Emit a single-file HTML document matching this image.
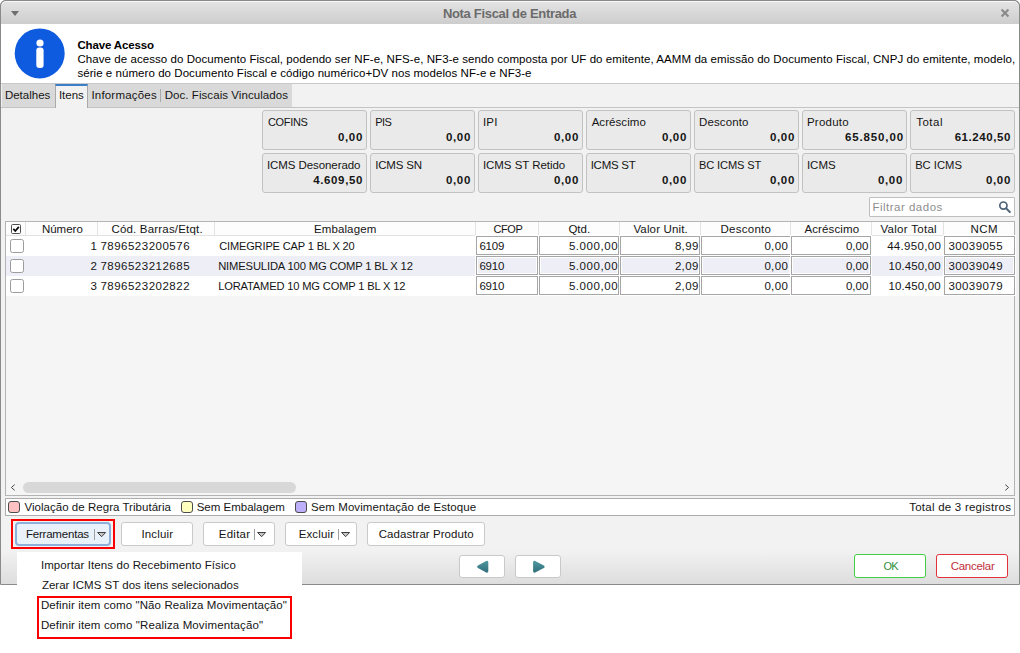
<!DOCTYPE html>
<html lang="pt-BR">
<head>
<meta charset="utf-8">
<title>Nota Fiscal de Entrada</title>
<style>
html,body{margin:0;padding:0;background:#fff;}
body{width:1020px;height:653px;position:relative;overflow:hidden;font-family:"Liberation Sans",sans-serif;font-size:11.5px;color:#151515;}
.a{position:absolute;box-sizing:border-box;}
.t{position:absolute;white-space:pre;line-height:14px;}
#win{left:0;top:0;width:1020px;height:585px;border:1px solid #8a8a8a;border-radius:6px 6px 0 0;background:#f2f2f2;overflow:hidden;}
#tbar{left:0;top:0;width:1020px;height:24px;background:linear-gradient(#e4e4e4,#cdcdcd);box-shadow:inset 0 1px 0 #f8f8f8;}
#head{left:1px;top:24px;width:1018px;height:59px;background:#fff;}
#tabs{left:1px;top:83px;width:1018px;height:25px;background:#f2f2f2;border-top:1px solid #c9c9c9;border-bottom:1px solid #c4c4c4;}
.tab{top:84px;height:23px;background:#d9d9d9;}
#tabact{left:55px;top:84px;width:33px;height:24px;background:#f2f2f2;border:1px solid #a9a9a9;border-bottom:none;border-top:2px solid #3b7fc9;}
.sb{width:105px;height:40px;background:#eaeaea;border:1px solid #c2c2c2;border-radius:3px;}
#filter{left:869px;top:197px;width:146px;height:20px;background:#fff;border:1px solid #bebebe;border-radius:1px;}
#tbl{left:5px;top:221px;width:1010px;height:275px;background:#f5f5f5;border:1px solid #b4b4b4;}
#thead{left:6px;top:222px;width:1008px;height:14px;background:#fdfdfd;border-bottom:1px solid #e2e2e2;}
.hs{top:222px;width:1px;height:14px;background:#e2e2e2;}
.row{left:6px;width:1008px;height:20px;background:#fff;}
.row.alt{background:#eeeff6;}
.cell{height:19px;border:1px solid #a6a6a6;box-shadow:inset 0 0 0 1px #fff,0 0 0 1px #fff;}
.cb{left:10px;width:14px;height:14px;background:#fff;border:1px solid #9c9c9c;border-radius:2.5px;}
#legend{left:5px;top:498px;width:1010px;height:18px;background:#fff;border:1px solid #adadad;}
.sw{top:501px;width:12px;height:12px;border:1px solid #4c4c4c;border-radius:3px;}
.btn{top:522px;height:24px;background:#fff;border:1px solid #c9c9c9;border-radius:3px;}
.sep{top:529px;width:1px;height:11px;background:#a0a0a0;}
.red{border:2px solid #fa0000;}
#foot{left:1px;top:550px;width:1018px;height:34px;background:linear-gradient(#f2f2f2,#dddddd);}
#menu{left:17px;top:552px;width:285px;height:101px;background:#fff;}
</style>
</head>
<body>
<div id="win" class="a"></div>
<div id="tbar" class="a" style="border:1px solid #8a8a8a;border-bottom:none;border-radius:6px 6px 0 0;"></div>
<svg class="a" style="left:10px;top:10px" width="10" height="7" viewBox="0 0 10 7"><path d="M1 1h8L5 6z" fill="#6f6f6f"/></svg>
<svg class="a" style="left:1000px;top:8px" width="10" height="10" viewBox="0 0 10 10"><path d="M1.6 1.6l6.8 6.8M8.4 1.6l-6.8 6.8" stroke="#8a8a8a" stroke-width="2.1" stroke-linecap="butt"/></svg>
<div id="head" class="a"></div>
<svg class="a" style="left:14px;top:28px" width="51" height="51" viewBox="0 0 51 51"><circle cx="25.7" cy="25.4" r="25" fill="#0f5be0"/><circle cx="26" cy="15" r="3.6" fill="#fff"/><rect x="22.3" y="19.6" width="7.3" height="20.4" rx="3" fill="#fff"/></svg>
<div id="tabs" class="a"></div>
<div class="a tab" style="left:2px;width:53px;"></div>
<div class="a tab" style="left:88px;width:204px;"></div>
<div class="a" style="left:160px;top:89px;width:1px;height:13px;background:#a9a9a9;"></div>
<div id="tabact" class="a"></div>
<div class="a sb" style="left:262px;top:110px;"></div>
<div class="a sb" style="left:370px;top:110px;"></div>
<div class="a sb" style="left:478px;top:110px;"></div>
<div class="a sb" style="left:586px;top:110px;"></div>
<div class="a sb" style="left:694px;top:110px;"></div>
<div class="a sb" style="left:802px;top:110px;"></div>
<div class="a sb" style="left:910px;top:110px;"></div>
<div class="a sb" style="left:262px;top:153px;"></div>
<div class="a sb" style="left:370px;top:153px;"></div>
<div class="a sb" style="left:478px;top:153px;"></div>
<div class="a sb" style="left:586px;top:153px;"></div>
<div class="a sb" style="left:694px;top:153px;"></div>
<div class="a sb" style="left:802px;top:153px;"></div>
<div class="a sb" style="left:910px;top:153px;"></div>
<div id="filter" class="a"></div>
<svg class="a" style="left:998px;top:200px" width="14" height="14" viewBox="0 0 14 14"><circle cx="5.4" cy="5.6" r="3.6" fill="none" stroke="#4d6379" stroke-width="1.7"/><path d="M8.2 8.4l3.6 3.6" stroke="#4d6379" stroke-width="2" stroke-linecap="round"/></svg>
<div id="tbl" class="a"></div>
<div id="thead" class="a"></div>
<div class="a hs" style="left:25px;"></div>
<div class="a hs" style="left:97px;"></div>
<div class="a hs" style="left:214px;"></div>
<div class="a hs" style="left:475px;"></div>
<div class="a hs" style="left:538px;"></div>
<div class="a hs" style="left:619px;"></div>
<div class="a hs" style="left:700px;"></div>
<div class="a hs" style="left:790px;"></div>
<div class="a hs" style="left:871px;"></div>
<div class="a hs" style="left:943px;"></div>
<div class="a row" style="top:236px;"></div>
<div class="a cb" style="top:239px;"></div>
<div class="a cell" style="left:476px;top:236px;width:62px;"></div>
<div class="a cell" style="left:539px;top:236px;width:80px;"></div>
<div class="a cell" style="left:620px;top:236px;width:80px;"></div>
<div class="a cell" style="left:701px;top:236px;width:90px;"></div>
<div class="a cell" style="left:791px;top:236px;width:80px;"></div>
<div class="a cell" style="left:944px;top:236px;width:71px;"></div>
<div class="a row alt" style="top:256px;"></div>
<div class="a cb" style="top:259px;"></div>
<div class="a cell" style="left:476px;top:256px;width:62px;"></div>
<div class="a cell" style="left:539px;top:256px;width:80px;"></div>
<div class="a cell" style="left:620px;top:256px;width:80px;"></div>
<div class="a cell" style="left:701px;top:256px;width:90px;"></div>
<div class="a cell" style="left:791px;top:256px;width:80px;"></div>
<div class="a cell" style="left:944px;top:256px;width:71px;"></div>
<div class="a row" style="top:276px;"></div>
<div class="a cb" style="top:279px;"></div>
<div class="a cell" style="left:476px;top:276px;width:62px;"></div>
<div class="a cell" style="left:539px;top:276px;width:80px;"></div>
<div class="a cell" style="left:620px;top:276px;width:80px;"></div>
<div class="a cell" style="left:701px;top:276px;width:90px;"></div>
<div class="a cell" style="left:791px;top:276px;width:80px;"></div>
<div class="a cell" style="left:944px;top:276px;width:71px;"></div>
<svg class="a" style="left:11px;top:224px" width="10" height="10" viewBox="0 0 10 10"><rect x="0.5" y="0.5" width="9" height="9" rx="1.1" fill="#fff" stroke="#505050"/><path d="M2.3 4.9l2 2.1L7.8 2.9" fill="none" stroke="#0a0a0a" stroke-width="1.8" stroke-linecap="butt"/></svg>
<div class="a" style="left:23px;top:482px;width:273px;height:11px;background:#d8d8d8;border-radius:5.5px;"></div>
<svg class="a" style="left:10px;top:483px" width="7" height="9" viewBox="0 0 7 9"><path d="M4.7 1.6L1.4 4.5l3.3 2.9" fill="none" stroke="#4a4a4a" stroke-width="1"/></svg>
<svg class="a" style="left:1003px;top:483px" width="7" height="9" viewBox="0 0 7 9"><path d="M2.3 1.6l3.3 2.9-3.3 2.9" fill="none" stroke="#4a4a4a" stroke-width="1"/></svg>
<div id="legend" class="a"></div>
<div class="a sw" style="left:8px;background:#ffc1c1;"></div>
<div class="a sw" style="left:181px;background:#ffffbe;"></div>
<div class="a sw" style="left:295px;background:#beaffb;"></div>
<div id="foot" class="a"></div>
<div class="a red" style="left:11px;top:519px;width:104px;height:30px;"></div>
<div class="a btn" style="left:15px;width:96px;background:#e9f1fb;border:2px solid #8cb0da;border-radius:4px;"></div>
<div class="a btn" style="left:121px;width:72px;"></div>
<div class="a btn" style="left:203px;width:72px;"></div>
<div class="a btn" style="left:285px;width:72px;"></div>
<div class="a btn" style="left:367px;width:118px;"></div>
<div class="a sep" style="left:94px;"></div>
<svg class="a" style="left:96px;top:531px" width="12" height="8" viewBox="0 0 12 8"><path d="M1.6 1.5h8L5.6 5.7z" fill="#c6c6c6" stroke="#404040" stroke-width="1" stroke-linejoin="miter"/></svg>
<div class="a sep" style="left:254px;"></div>
<svg class="a" style="left:256px;top:531px" width="12" height="8" viewBox="0 0 12 8"><path d="M1.6 1.5h8L5.6 5.7z" fill="#c6c6c6" stroke="#404040" stroke-width="1" stroke-linejoin="miter"/></svg>
<div class="a sep" style="left:338px;"></div>
<svg class="a" style="left:340px;top:531px" width="12" height="8" viewBox="0 0 12 8"><path d="M1.6 1.5h8L5.6 5.7z" fill="#c6c6c6" stroke="#404040" stroke-width="1" stroke-linejoin="miter"/></svg>
<div class="a btn" style="left:459px;top:555px;width:46px;height:23px;"></div>
<div class="a btn" style="left:515px;top:555px;width:46px;height:23px;"></div>
<svg class="a" style="left:476px;top:560px" width="14" height="14" viewBox="0 0 14 14"><defs><linearGradient id="tg" x1="0" y1="0" x2="0" y2="1"><stop offset="0" stop-color="#4a929c"/><stop offset="1" stop-color="#33737e"/></linearGradient></defs><path d="M10.9 2.3v9L2.6 6.8z" fill="url(#tg)" stroke="url(#tg)" stroke-width="2.8" stroke-linejoin="round"/></svg>
<svg class="a" style="left:532px;top:560px" width="14" height="14" viewBox="0 0 14 14"><path d="M2.5 2.3v9L11.2 6.8z" fill="url(#tg)" stroke="url(#tg)" stroke-width="2.8" stroke-linejoin="round"/></svg>
<div class="a btn" style="left:854px;top:554px;width:72px;height:24px;border-color:#43cf43;"></div>
<div class="a btn" style="left:936px;top:554px;width:72px;height:24px;border-color:#e0323a;"></div>
<div id="menu" class="a"></div>
<div class="a red" style="left:37px;top:596px;width:255px;height:43px;"></div>
<span class="t" style="left:442.90px;top:6.70px;letter-spacing:-0.314px;font-size:13px;font-weight:700;color:#6b6b6b;">Nota Fiscal de Entrada</span>
<span class="t" style="left:77.40px;top:38.02px;letter-spacing:-0.136px;font-weight:700;color:#000;">Chave Acesso</span>
<span class="t" style="left:77.40px;top:52.02px;letter-spacing:0.067px;color:#000;">Chave de acesso do Documento Fiscal, podendo ser NF-e, NFS-e, NF3-e sendo composta por UF do emitente, AAMM da emissão do Documento Fiscal, CNPJ do emitente, modelo,</span>
<span class="t" style="left:77.40px;top:66.02px;letter-spacing:0.056px;color:#000;">série e número do Documento Fiscal e código numérico+DV nos modelos NF-e e NF3-e</span>
<span class="t" style="left:4.90px;top:87.82px;letter-spacing:0.000px;">Detalhes</span>
<span class="t" style="left:58.90px;top:87.82px;letter-spacing:0.000px;">Itens</span>
<span class="t" style="left:91.40px;top:87.82px;letter-spacing:0.200px;">Informações</span>
<span class="t" style="left:164.70px;top:87.82px;letter-spacing:0.064px;">Doc. Fiscais Vinculados</span>
<span class="t" style="left:267.90px;top:115.45px;letter-spacing:-0.300px;font-size:10.98px;">COFINS</span>
<span class="t" style="left:337.90px;top:130.27px;letter-spacing:0.667px;font-weight:700;">0,00</span>
<span class="t" style="left:375.15px;top:115.43px;letter-spacing:-0.500px;font-size:11.03px;">PIS</span>
<span class="t" style="left:445.90px;top:130.27px;letter-spacing:0.667px;font-weight:700;">0,00</span>
<span class="t" style="left:482.90px;top:115.27px;letter-spacing:0.250px;">IPI</span>
<span class="t" style="left:553.90px;top:130.27px;letter-spacing:0.667px;font-weight:700;">0,00</span>
<span class="t" style="left:591.65px;top:115.27px;letter-spacing:0.062px;">Acréscimo</span>
<span class="t" style="left:661.90px;top:130.27px;letter-spacing:0.667px;font-weight:700;">0,00</span>
<span class="t" style="left:699.00px;top:115.27px;letter-spacing:0.114px;">Desconto</span>
<span class="t" style="left:769.90px;top:130.27px;letter-spacing:0.667px;font-weight:700;">0,00</span>
<span class="t" style="left:806.90px;top:115.27px;letter-spacing:0.250px;">Produto</span>
<span class="t" style="left:844.90px;top:130.27px;letter-spacing:0.875px;font-weight:700;">65.850,00</span>
<span class="t" style="left:916.15px;top:115.27px;letter-spacing:0.500px;">Total</span>
<span class="t" style="left:954.65px;top:130.27px;letter-spacing:0.562px;font-weight:700;">61.240,50</span>
<span class="t" style="left:266.90px;top:158.27px;letter-spacing:-0.071px;">ICMS Desonerado</span>
<span class="t" style="left:313.15px;top:173.27px;letter-spacing:0.643px;font-weight:700;">4.609,50</span>
<span class="t" style="left:375.15px;top:158.27px;letter-spacing:-0.167px;">ICMS SN</span>
<span class="t" style="left:445.90px;top:173.27px;letter-spacing:0.667px;font-weight:700;">0,00</span>
<span class="t" style="left:482.90px;top:158.27px;letter-spacing:-0.038px;">ICMS ST Retido</span>
<span class="t" style="left:553.90px;top:173.27px;letter-spacing:0.667px;font-weight:700;">0,00</span>
<span class="t" style="left:590.65px;top:158.27px;letter-spacing:-0.250px;">ICMS ST</span>
<span class="t" style="left:661.90px;top:173.27px;letter-spacing:0.667px;font-weight:700;">0,00</span>
<span class="t" style="left:699.00px;top:158.40px;letter-spacing:-0.133px;font-size:11.1px;">BC ICMS ST</span>
<span class="t" style="left:769.90px;top:173.27px;letter-spacing:0.667px;font-weight:700;">0,00</span>
<span class="t" style="left:806.90px;top:158.27px;letter-spacing:0.000px;">ICMS</span>
<span class="t" style="left:877.90px;top:173.27px;letter-spacing:0.667px;font-weight:700;">0,00</span>
<span class="t" style="left:915.15px;top:158.36px;letter-spacing:0.000px;font-size:11.23px;">BC ICMS</span>
<span class="t" style="left:985.90px;top:173.27px;letter-spacing:0.667px;font-weight:700;">0,00</span>
<span class="t" style="left:872.40px;top:199.52px;letter-spacing:0.500px;color:#8e8e8e;">Filtrar dados</span>
<span class="t" style="left:41.90px;top:222.02px;letter-spacing:0.000px;">Número</span>
<span class="t" style="left:111.40px;top:222.02px;letter-spacing:0.188px;">Cód. Barras/Etqt.</span>
<span class="t" style="left:313.90px;top:222.02px;letter-spacing:0.125px;">Embalagem</span>
<span class="t" style="left:493.40px;top:222.20px;letter-spacing:-0.333px;font-size:10.98px;">CFOP</span>
<span class="t" style="left:568.40px;top:222.02px;letter-spacing:0.000px;">Qtd.</span>
<span class="t" style="left:633.40px;top:222.02px;letter-spacing:0.150px;">Valor Unit.</span>
<span class="t" style="left:720.40px;top:222.02px;letter-spacing:0.286px;">Desconto</span>
<span class="t" style="left:804.40px;top:222.02px;letter-spacing:0.125px;">Acréscimo</span>
<span class="t" style="left:880.40px;top:222.02px;letter-spacing:0.300px;">Valor Total</span>
<span class="t" style="left:970.40px;top:222.02px;letter-spacing:0.500px;">NCM</span>
<span class="t" style="left:90.40px;top:238.52px;letter-spacing:0.000px;">1</span>
<span class="t" style="left:100.40px;top:238.52px;letter-spacing:0.500px;">7896523200576</span>
<span class="t" style="left:219.15px;top:238.67px;letter-spacing:-0.136px;font-size:11.04px;">CIMEGRIPE CAP 1 BL X 20</span>
<span class="t" style="left:479.40px;top:238.52px;letter-spacing:-0.167px;">6109</span>
<span class="t" style="left:568.90px;top:238.52px;letter-spacing:0.571px;">5.000,00</span>
<span class="t" style="left:674.90px;top:238.52px;letter-spacing:0.333px;">8,99</span>
<span class="t" style="left:764.40px;top:238.52px;letter-spacing:0.333px;">0,00</span>
<span class="t" style="left:845.90px;top:238.52px;letter-spacing:0.000px;">0,00</span>
<span class="t" style="left:887.15px;top:238.52px;letter-spacing:0.312px;">44.950,00</span>
<span class="t" style="left:948.40px;top:238.52px;letter-spacing:0.429px;">30039055</span>
<span class="t" style="left:90.40px;top:258.52px;letter-spacing:0.000px;">2</span>
<span class="t" style="left:100.40px;top:258.52px;letter-spacing:0.500px;">7896523212685</span>
<span class="t" style="left:218.15px;top:258.62px;letter-spacing:-0.145px;font-size:11.21px;">NIMESULIDA 100 MG COMP 1 BL X 12</span>
<span class="t" style="left:479.40px;top:258.52px;letter-spacing:-0.167px;">6910</span>
<span class="t" style="left:568.90px;top:258.52px;letter-spacing:0.571px;">5.000,00</span>
<span class="t" style="left:674.90px;top:258.52px;letter-spacing:0.333px;">2,09</span>
<span class="t" style="left:764.40px;top:258.52px;letter-spacing:0.333px;">0,00</span>
<span class="t" style="left:845.90px;top:258.52px;letter-spacing:0.000px;">0,00</span>
<span class="t" style="left:888.40px;top:258.52px;letter-spacing:0.125px;">10.450,00</span>
<span class="t" style="left:948.40px;top:258.52px;letter-spacing:0.429px;">30039049</span>
<span class="t" style="left:90.40px;top:278.52px;letter-spacing:0.000px;">3</span>
<span class="t" style="left:100.40px;top:278.52px;letter-spacing:0.500px;">7896523202822</span>
<span class="t" style="left:218.15px;top:278.64px;letter-spacing:-0.155px;font-size:11.13px;">LORATAMED 10 MG COMP 1 BL X 12</span>
<span class="t" style="left:479.40px;top:278.52px;letter-spacing:-0.167px;">6910</span>
<span class="t" style="left:568.90px;top:278.52px;letter-spacing:0.571px;">5.000,00</span>
<span class="t" style="left:674.90px;top:278.52px;letter-spacing:0.333px;">2,09</span>
<span class="t" style="left:764.40px;top:278.52px;letter-spacing:0.333px;">0,00</span>
<span class="t" style="left:845.90px;top:278.52px;letter-spacing:0.000px;">0,00</span>
<span class="t" style="left:888.40px;top:278.52px;letter-spacing:0.125px;">10.450,00</span>
<span class="t" style="left:948.40px;top:278.52px;letter-spacing:0.429px;">30039079</span>
<span class="t" style="left:24.40px;top:499.72px;letter-spacing:0.037px;">Violação de Regra Tributária</span>
<span class="t" style="left:196.70px;top:499.72px;letter-spacing:0.000px;">Sem Embalagem</span>
<span class="t" style="left:311.10px;top:499.72px;letter-spacing:0.077px;">Sem Movimentação de Estoque</span>
<span class="t" style="left:909.20px;top:499.72px;letter-spacing:0.242px;">Total de 3 registros</span>
<span class="t" style="left:25.90px;top:526.52px;letter-spacing:-0.200px;">Ferramentas</span>
<span class="t" style="left:141.40px;top:526.52px;letter-spacing:0.167px;">Incluir</span>
<span class="t" style="left:218.70px;top:526.52px;letter-spacing:0.280px;">Editar</span>
<span class="t" style="left:298.70px;top:526.52px;letter-spacing:0.133px;">Excluir</span>
<span class="t" style="left:378.70px;top:526.52px;letter-spacing:0.062px;">Cadastrar Produto</span>
<span class="t" style="left:883.60px;top:559.20px;letter-spacing:-1.000px;font-size:10.98px;color:#2f8f3a;">OK</span>
<span class="t" style="left:950.70px;top:559.02px;letter-spacing:-0.286px;color:#c0303a;">Cancelar</span>
<span class="t" style="left:40.90px;top:558.02px;letter-spacing:0.091px;">Importar Itens do Recebimento Físico</span>
<span class="t" style="left:41.90px;top:577.82px;letter-spacing:0.006px;">Zerar ICMS ST dos itens selecionados</span>
<span class="t" style="left:40.90px;top:597.72px;letter-spacing:0.107px;">Definir item como &quot;Não Realiza Movimentação&quot;</span>
<span class="t" style="left:40.90px;top:617.52px;letter-spacing:0.128px;">Definir item como &quot;Realiza Movimentação&quot;</span>
</body>
</html>
